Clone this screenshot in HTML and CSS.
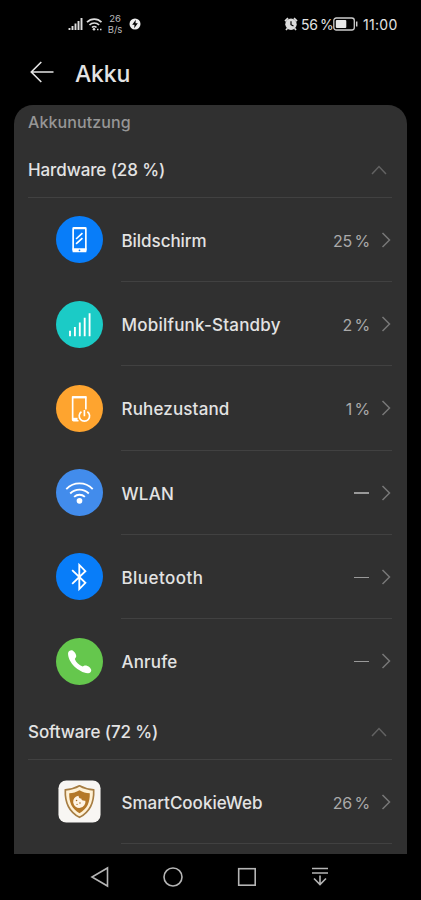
FILE: index.html
```html
<!DOCTYPE html>
<html lang="de">
<head>
<meta charset="utf-8">
<title>Akku</title>
<link rel="stylesheet" href="styles.css">
</head>
<body>
<div class="screen">
  <div class="status">
    <svg class="signal" width="16" height="14" viewBox="0 0 16 14" stroke="#ddd" stroke-width="1.9"><path d="M1.5 13v-2M4.500 13V9M7.500 13V6.500M10.500 13V4M13.500 13V1"/></svg>
    <svg class="wifi" width="17" height="15" viewBox="0 0 17 15" fill="none" stroke="#ddd" stroke-width="1.7"><path d="M1 5.200C5 1 11.500 1 15.500 5.200M3.500 8c2.600-2.700 7-2.700 9.600 0M6 10.500c1.200-1.200 3.300-1.200 4.500 0"/><circle cx="8" cy="12.300" r="1.300" fill="#ddd" stroke="none"/><path d="M11 12.500h1.500M14 12.500h1.500"/></svg>
    <div class="speed"><span>26</span><span>B/s</span></div>
    <svg class="bolt" width="12" height="12" viewBox="0 0 12 12"><circle cx="6" cy="6" r="5.500" fill="#eee"/><path d="M6.800 1.800 3.200 6.700h2.300L5.200 10.200 8.800 5.300H6.500z" fill="#000"/></svg>
    <svg class="alarm" width="14" height="14" viewBox="0 0 14 14"><circle cx="7" cy="7.300" r="5.700" fill="#ddd"/><path d="m1 4.200 3-3M13 4.200l-3-3M3.200 11.500 2 13M10.800 11.500 12 13" stroke="#ddd" stroke-width="1.700"/><path d="M7 4.200v3.500l2.500 1.300" fill="none" stroke="#000" stroke-width="1.200"/></svg>
    <span class="charge">56 %</span>
    <svg class="battery" width="26" height="14" viewBox="0 0 26 14"><rect x=".8" y="1" width="20.500" height="12" rx="2.500" fill="none" stroke="#ccc" stroke-width="1.300"/><rect x="2.800" y="3" width="10.500" height="8" rx="1" fill="#e8e8e8"/><path d="M23.700 4.500v5" stroke="#ccc" stroke-width="1.500"/></svg>
    <span class="clock">11:00</span>
  </div>
  <header class="title">
    <svg width="24" height="22" viewBox="0 0 24 22" fill="none" stroke="#e5e5e5" stroke-width="1.600"><path d="M23.500 11H1.500M11.300 1 1.300 11l10 10"/></svg>
    <h1>Akku</h1>
  </header>
  <main class="panel">
    <div class="caption"><span>Akkunutzung</span></div>
    <div class="group"><span class="hardware">Hardware (28 %)</span><svg class="up" width="16" height="10" viewBox="0 0 16 10"><path d="m1 9 7-7.500L15 9"/></svg></div>
    <div class="row">
      <svg class="icon" viewBox="0 0 48 48"><circle cx="24" cy="24" r="24" fill="#087df9"/><rect x="17.500" y="12" width="13" height="24" rx="1.500" fill="none" stroke="#fff" stroke-width="1.700"/><path d="M17 33h14v4H17z" fill="#fff"/><path d="M17 12.500h14" stroke="#fff" stroke-width="2"/><path d="m20.500 23.500 6.500-6M20.500 28.500l6.500-6" stroke="#fff" stroke-width="1.700"/><circle cx="24" cy="35" r=".9" fill="#087df9"/></svg>
      <div class="body"><span class="name n1">Bildschirm</span><span class="value">25 %</span><svg class="go" viewBox="0 0 10 16"><path d="m1.500 1 7 7-7 7"/></svg></div>
    </div>
    <div class="row">
      <svg class="icon" viewBox="0 0 48 48"><circle cx="24" cy="24" r="24" fill="#1bcbc6"/><path d="M14.300 36v-5.500M19.300 36V26.500M24.300 36V22M29.300 36V17M34.300 36V12.500" stroke="#fff" stroke-width="1.900"/></svg>
      <div class="body"><span class="name n2">Mobilfunk-Standby</span><span class="value">2 %</span><svg class="go" viewBox="0 0 10 16"><path d="m1.500 1 7 7-7 7"/></svg></div>
    </div>
    <div class="row">
      <svg class="icon" viewBox="0 0 48 48"><circle cx="24" cy="24" r="24" fill="#fea42f"/><path d="M23 36.500h-5a1 1 0 0 1-1-1V12.500h13.500V25" fill="none" stroke="#fff" stroke-width="1.700"/><path d="M16.500 12.500h14.500" stroke="#fff" stroke-width="2.400"/><path d="M17 33.500h5v3h-5z" fill="#fff"/><path d="M26 27.300a5.300 5.300 0 1 0 6 0M29 25.500V32" fill="none" stroke="#fff" stroke-width="1.700"/></svg>
      <div class="body"><span class="name n3">Ruhezustand</span><span class="value">1 %</span><svg class="go" viewBox="0 0 10 16"><path d="m1.500 1 7 7-7 7"/></svg></div>
    </div>
    <div class="row">
      <svg class="icon" viewBox="0 0 48 48"><circle cx="24" cy="24" r="24" fill="#428cec"/><path d="M10.500 20.500c7.700-7.700 19.300-7.700 27 0M14.500 25c5.500-5.300 13.500-5.300 19 0M18.500 28.500c3.200-3 7.800-3 11 0" fill="none" stroke="#fff" stroke-width="1.900"/><circle cx="24" cy="32.500" r="2.900" fill="#fff"/></svg>
      <div class="body"><span class="name n4">WLAN</span><span class="dash"></span><svg class="go" viewBox="0 0 10 16"><path d="m1.500 1 7 7-7 7"/></svg></div>
    </div>
    <div class="row">
      <svg class="icon" viewBox="0 0 48 48"><circle cx="24" cy="24" r="24" fill="#087df9"/><path d="m16.500 17.500 13.500 13-6.200 6.300V12.200L30 18.500 16.500 31.500" fill="none" stroke="#fff" stroke-width="1.900"/></svg>
      <div class="body"><span class="name n5">Bluetooth</span><span class="dash"></span><svg class="go" viewBox="0 0 10 16"><path d="m1.500 1 7 7-7 7"/></svg></div>
    </div>
    <div class="row last">
      <svg class="icon" viewBox="0 0 48 48"><circle cx="24" cy="24" r="24" fill="#65c74d"/><path d="M12.300 15.500c.2-2.200 3-3.800 4.700-2.700 2.500 1.500 4.300 5.200 3.500 6.700l-1.300 2c1.200 3.300 4.500 6.500 8 7.700l2-1c2.200-.8 6.500 1.800 6.800 4.600.2 2-1.500 3.400-3.500 3.200C23 35 12.200 25 12.300 15.500z" fill="#fff"/></svg>
      <div class="body"><span class="name n6">Anrufe</span><span class="dash"></span><svg class="go" viewBox="0 0 10 16"><path d="m1.500 1 7 7-7 7"/></svg></div>
    </div>
    <div class="group"><span class="software">Software (72 %)</span><svg class="up" width="16" height="10" viewBox="0 0 16 10"><path d="m1 9 7-7.500L15 9"/></svg></div>
    <div class="row">
      <svg class="icon" viewBox="0 0 48 48"><rect x="2.500" y="2.500" width="43" height="43" rx="8" fill="#f8f6f3"/><path d="M24 8c4.500 2.500 9 3.800 14.500 4.200.5 13-3.500 22.300-14.500 28C13 34.500 9 25.200 9.500 12.200 15 11.800 19.500 10.500 24 8z" fill="#fff1d5" stroke="#a67d43" stroke-width="1.700"/><path d="M24 12.500c3.500 2 6.500 2.900 10.500 3.200.2 9.800-2.800 15.800-10.500 20.300-7.700-4.500-10.700-10.500-10.500-20.300 4-.3 7-1.200 10.500-3.200z" fill="#b47828"/><path d="M23 18c.2 2 1 3 2.800 3 .2 1.700 1.400 2.400 4.200 2.200A6.300 6.300 0 1 1 23 18z" fill="#fff5e5"/><g fill="#a36b22"><circle cx="21" cy="23" r=".8"/><circle cx="24.500" cy="25.500" r=".8"/><circle cx="21.500" cy="27" r=".6"/></g></svg>
      <div class="body"><span class="name n7">SmartCookieWeb</span><span class="value">26 %</span><svg class="go" viewBox="0 0 10 16"><path d="m1.500 1 7 7-7 7"/></svg></div>
    </div>
  </main>
  <nav class="nav">
    <svg viewBox="0 0 22 22"><path d="M18.500 2v18L3 11z"/></svg>
    <svg viewBox="0 0 22 22"><circle cx="11" cy="11" r="9"/></svg>
    <svg viewBox="0 0 22 22"><rect x="2.700" y="2.700" width="16.500" height="16.500"/></svg>
    <svg viewBox="0 0 22 22"><path d="M3 2.500h16M3 7h16M11 9.500v9M5 12.500l6 6 6-6"/></svg>
  </nav>
</div>
</body>
</html>
```
FILE: styles.css
```css
* { box-sizing: border-box; }
body { margin: 0; background: #000; font-family: Inter, sans-serif; color: #e3e3e3; }
svg { display: block; flex: none; }
.screen { width: 421px; height: 900px; display: flex; flex-direction: column; overflow: hidden; background: #000; }
.status { height: 48px; display: flex; align-items: center; padding: 0 23px 0 68px; white-space: nowrap; }
.wifi { margin-left: 2px; }
.speed { width: 18px; margin-left: 3px; display: flex; flex-direction: column; align-items: center; font-size: 9.5px; line-height: 11px; color: #bbb; }
.bolt { margin-left: 5px; }
.alarm { margin-left: auto; }
.charge { width: 31px; margin-left: 3px; padding-top: 1px; font-size: 14px; letter-spacing: -0.2px; word-spacing: -1.5px; }
.battery { margin-left: 1px; }
.clock { width: 35px; margin-left: 4px; padding-top: 1px; font-size: 14px; letter-spacing: 0.3px; }
.title { height: 57px; display: flex; align-items: center; gap: 21px; padding: 0 30px 7px; }
.title h1 { margin: 0; padding-top: 1px; font-size: 23px; font-weight: 500; line-height: 28px; letter-spacing: -0.2px; }
.title svg { margin-top: -3px; }
.panel { height: 748.5px; margin: 0 14px; border-radius: 19px 19px 0 0; background: #303030; overflow: hidden; flex: none; }
.caption { height: 36.4px; padding: 7px 14px 0; font-size: 16px; line-height: 20px; font-weight: 500; color: #969696; letter-spacing: 0.1px; }
.group { height: 56.4px; margin: 0 15px 0 14px; display: flex; align-items: center; justify-content: space-between; border-bottom: 1px solid #414141; padding: 2px 5px 0 0; font-size: 17px; font-weight: 500; white-space: nowrap; }
.hardware, .software { letter-spacing: -0.1px; }
.up path { fill: none; stroke: #626262; stroke-width: 1.5; }
.row { height: 84.25px; display: flex; align-items: center; padding: 0 15px 0 42px; }
.icon { width: 47px; height: 47px; margin-right: 18px; }
.body { flex: 1; height: 100%; display: flex; align-items: center; border-bottom: 1px solid #414141; padding: 1px 1px 0 0; white-space: nowrap; }
.last .body { border-bottom-color: transparent; }
.name { padding: 2px 0 0 0.5px; font-size: 17px; font-weight: 500; }
.n1 { letter-spacing: -0.05px; }
.n2 { letter-spacing: 0.22px; }
.n3 { letter-spacing: 0.15px; }
.n4 { letter-spacing: 0.25px; }
.n5 { letter-spacing: 0.45px; }
.n6 { letter-spacing: 0.15px; }
.value { margin-left: auto; padding-top: 2px; font-size: 16px; letter-spacing: -0.2px; word-spacing: -1.8px; color: #aaa; }
.dash { margin: 1px 0 0 auto; width: 15px; height: 1.5px; background: #999; }
.go { width: 10px; height: 16px; margin-left: 11px; }
.dash + .go { margin-left: 12px; }
.go path { fill: none; stroke: #777; stroke-width: 1.5; }
.nav { height: 46.5px; display: flex; justify-content: space-between; align-items: center; padding: 0 90px 0 89px; }
.nav svg { width: 22px; height: 22px; }
.nav svg * { fill: none; stroke: #b5b5b5; stroke-width: 1.6; }
```
